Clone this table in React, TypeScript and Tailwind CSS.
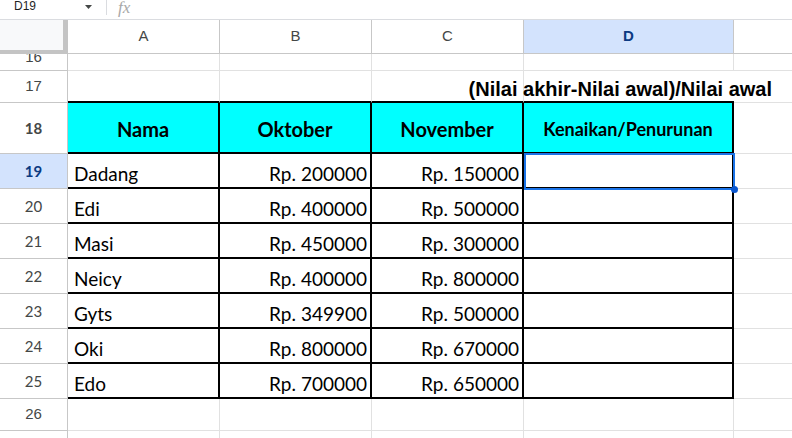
import React from 'react'

interface Row {
  n: number
  nama: string
  okt: number
  nov: number
}

const rows: Row[] = [
  { n: 19, nama: 'Dadang', okt: 200000, nov: 150000 },
  { n: 20, nama: 'Edi', okt: 400000, nov: 500000 },
  { n: 21, nama: 'Masi', okt: 450000, nov: 300000 },
  { n: 22, nama: 'Neicy', okt: 400000, nov: 800000 },
  { n: 23, nama: 'Gyts', okt: 349900, nov: 500000 },
  { n: 24, nama: 'Oki', okt: 800000, nov: 670000 },
  { n: 25, nama: 'Edo', okt: 700000, nov: 650000 },
]

function RowNum({ n, active = false }: { n?: number; active?: boolean }) {
  return (
    <div
      className={`w-[68px] shrink-0 flex items-center justify-center border-r border-b border-[#c7c7c7] text-[15px] ${
        active ? 'bg-[#d3e3fd] font-bold text-[#0b3a82]' : 'bg-white text-[#444746]'
      }`}
    >
      {n}
    </div>
  )
}

// empty grid cells for columns A-E
function BlankCells() {
  return (
    <>
      <div className="w-[152px] shrink-0 border-r border-b border-[#e1e1e1]" />
      <div className="w-[152px] shrink-0 border-r border-b border-[#e1e1e1]" />
      <div className="w-[152px] shrink-0 border-r border-b border-[#e1e1e1]" />
      <div className="w-[210px] shrink-0 border-r border-b border-[#e1e1e1]" />
      <div className="flex-1 border-b border-[#e1e1e1]" />
    </>
  )
}

export default function App() {
  return (
    <div className="w-[792px] h-[438px] overflow-hidden bg-white font-['Liberation_Sans',Arial,sans-serif]">
      {/* Formula bar */}
      <div className="h-[20px] flex items-start border-b border-[#dadce0]">
        <div className="w-[96px] flex items-start justify-between pl-[14px] pr-[4px]">
          <span className="text-[12px] leading-none text-[#1f1f1f]">D19</span>
          <svg width="7" height="4" viewBox="0 0 7 4" className="mt-[5px]">
            <path d="M0 0h7L3.5 4z" fill="#444746" />
          </svg>
        </div>
        <div className="ml-[10px] w-px h-[15px] bg-[#dadce0]" />
        <span className="ml-[11px] -mt-[1px] text-[17px] leading-none italic text-[#a8a8a8] font-['Liberation_Serif',serif]">
          fx
        </span>
      </div>

      {/* Column headers */}
      <div className="flex h-[34px] text-[15px] text-[#444746]">
        <div className="w-[68px] shrink-0 bg-[#f8f9fa] border-r-[5px] border-b-[4px] border-[#c4c4c4]" />
        <div className="w-[152px] shrink-0 flex items-center justify-center border-r border-b border-[#c7c7c7]">A</div>
        <div className="w-[152px] shrink-0 flex items-center justify-center border-r border-b border-[#c7c7c7]">B</div>
        <div className="w-[152px] shrink-0 flex items-center justify-center border-r border-b border-[#c7c7c7]">C</div>
        <div className="w-[210px] shrink-0 flex items-center justify-center border-r border-b border-[#c7c7c7] bg-[#d3e3fd] font-bold text-[#0b3a82]">
          D
        </div>
        <div className="flex-1 border-b border-[#c7c7c7]" />
      </div>

      {/* Row 16 (partly scrolled away) */}
      <div className="flex h-[17px]">
        <div className="w-[68px] shrink-0 flex justify-center overflow-hidden border-r border-b border-[#c7c7c7] text-[15px] text-[#444746]">
          <span className="-mt-[7px] leading-[20px]">16</span>
        </div>
        <BlankCells />
      </div>

      {/* Row 17 */}
      <div className="relative flex h-[32px]">
        <RowNum n={17} />
        <div className="w-[152px] shrink-0 border-r border-[#e1e1e1] border-b-2 border-b-black" />
        <div className="w-[152px] shrink-0 border-r border-[#e1e1e1] border-b-2 border-b-black" />
        <div className="w-[152px] shrink-0 border-r border-[#e1e1e1] border-b-2 border-b-black" />
        <div className="w-[210px] shrink-0 border-b-2 border-b-black" />
        <div className="flex-1 border-b border-[#e1e1e1]" />
        <span className="absolute right-[20px] bottom-[2px] text-[20px] leading-[24px] font-bold text-black whitespace-nowrap">
          (Nilai akhir-Nilai awal)/Nilai awal
        </span>
      </div>

      {/* Row 18: table header */}
      <div className="flex h-[51px] font-['Lato',sans-serif] font-bold text-black">
        <RowNum n={18} />
        <div className="w-[152px] shrink-0 flex items-center justify-center pt-[3px] bg-[#00ffff] border-r-2 border-b-2 border-black text-[20px]">
          Nama
        </div>
        <div className="w-[152px] shrink-0 flex items-center justify-center pt-[3px] bg-[#00ffff] border-r-2 border-b-2 border-black text-[20px]">
          Oktober
        </div>
        <div className="w-[152px] shrink-0 flex items-center justify-center pt-[3px] bg-[#00ffff] border-r-2 border-b-2 border-black text-[20px]">
          November
        </div>
        <div className="w-[210px] shrink-0 flex items-center justify-center pt-[3px] bg-[#00ffff] border-r-2 border-b-2 border-black text-[18px]">
          Kenaikan/Penurunan
        </div>
        <div className="flex-1 border-b border-[#e1e1e1]" />
      </div>

      {/* Data rows */}
      {rows.map((r, i) => (
        <div key={r.n} className="flex h-[35px] font-['Lato',sans-serif] text-[19px] leading-[22px] text-black">
          <RowNum n={r.n} active={i === 0} />
          <div className="w-[152px] shrink-0 flex items-end pl-[6px] pb-[2px] border-r-2 border-b-2 border-black">
            {r.nama}
          </div>
          <div className="w-[152px] shrink-0 flex items-end justify-end pr-[3px] pb-[2px] border-r-2 border-b-2 border-black">
            Rp. {r.okt}
          </div>
          <div className="w-[152px] shrink-0 flex items-end justify-end pr-[3px] pb-[2px] border-r-2 border-b-2 border-black">
            Rp. {r.nov}
          </div>
          <div className="relative w-[210px] shrink-0 border-r-2 border-b-2 border-black">
            {i === 0 && (
              <>
                <div className="absolute z-10 -top-[1px] left-0 -right-[3px] -bottom-[3px] border-2 border-[#1a73e8]" />
                <div className="absolute z-20 -right-[6px] -bottom-[6px] w-[7px] h-[7px] rounded-full bg-[#0b57d0]" />
              </>
            )}
          </div>
          <div className="flex-1 border-b border-[#e1e1e1]" />
        </div>
      ))}

      {/* Row 26 and the edge of row 27 */}
      <div className="flex h-[32px]">
        <RowNum n={26} />
        <BlankCells />
      </div>
      <div className="flex h-[35px]">
        <RowNum />
        <BlankCells />
      </div>
    </div>
  )
}
